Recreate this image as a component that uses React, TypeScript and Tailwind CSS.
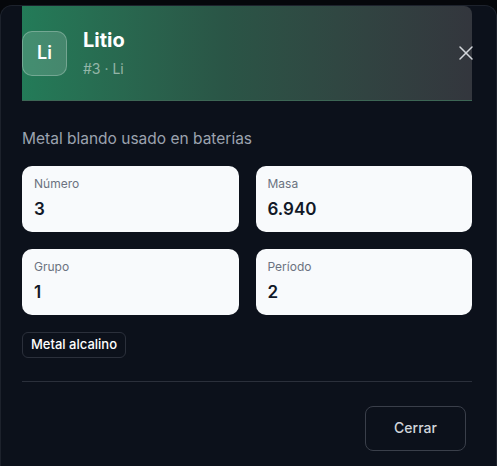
import { X } from "lucide-react";

const stats = [
  { label: "Número", value: "3" },
  { label: "Masa", value: "6.940" },
  { label: "Grupo", value: "1" },
  { label: "Período", value: "2" },
];

export default function App() {
  return (
    <div className="h-[466px] overflow-hidden bg-[#05070b] pt-[5px] font-['Inter',sans-serif]">
      <div className="h-full rounded-t-xl border border-b-0 border-[#1d222c] bg-[#0c111b] pl-[21px] pr-[24px]">
        <div className="relative flex h-[95px] items-center gap-4 rounded-tr-lg border-b border-[#3d6655] bg-gradient-to-r from-[#237b58] via-[#2a5546] via-45% to-[#33363d]">
          <div className="flex h-[45px] w-[45px] items-center justify-center rounded-[10px] border border-white/25 bg-white/15 text-lg font-semibold text-white">
            Li
          </div>
          <div className="flex flex-col pb-[2px]">
            <span className="text-xl font-bold leading-7 text-white">Litio</span>
            <span className="mt-[5px] text-sm text-white/50">#3 · Li</span>
          </div>
          <button className="absolute right-[-6px] top-[35px] text-[#d4d7dc]">
            <X size={24} strokeWidth={1.5} />
          </button>
        </div>

        <p className="mt-[26px] text-[15.5px] text-[#9ca3af]">Metal blando usado en baterías</p>

        <div className="mt-[16px] grid grid-cols-2 gap-x-[17px] gap-y-[17px]">
          {stats.map((s) => (
            <div key={s.label} className="flex h-[66px] flex-col justify-center rounded-[10px] bg-[#f8fafc] px-3">
              <span className="text-xs text-[#6b7280]">{s.label}</span>
              <span className="mt-[5px] text-[17px] font-semibold text-[#111827]">{s.value}</span>
            </div>
          ))}
        </div>

        <div className="mt-[17px] flex">
          <span className="rounded-md border border-[#2b303b] px-2 py-[2px] text-[13px] font-medium text-white">
            Metal alcalino
          </span>
        </div>

        <div className="mt-[23px] border-t border-[#2b303b]" />

        <div className="mt-6 flex justify-end pr-[6px]">
          <button className="h-[45px] w-[101px] rounded-lg border border-[#3a3f4a] text-sm font-medium text-[#d1d5db]">
            Cerrar
          </button>
        </div>
      </div>
    </div>
  );
}
